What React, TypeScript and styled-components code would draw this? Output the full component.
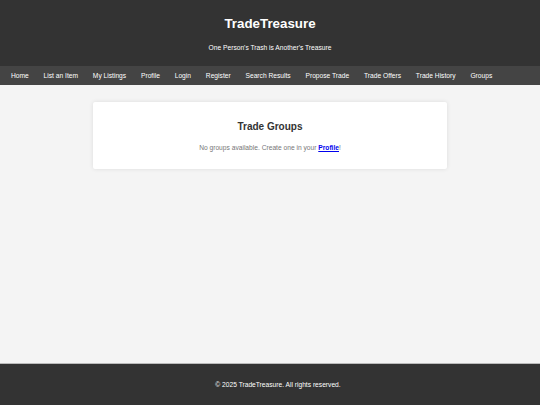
import React from "react";
import styled, { createGlobalStyle } from "styled-components";

const GlobalStyle = createGlobalStyle`
  html, body { margin: 0; padding: 0; }
  body {
    font-family: "Liberation Sans", Arial, sans-serif;
    font-size: 6.667px;
    background: #f4f4f4;
    color: #333;
  }
  * { box-sizing: border-box; }
`;

const Page = styled.div`
  min-height: 100vh;
  display: flex;
  flex-direction: column;
`;

const Header = styled.header`
  background: #333;
  color: #fff;
  height: 66px;
  padding: 15.5px 0 14px;
  display: flex;
  flex-direction: column;
  align-items: center;
`;

const Title = styled.h1`
  margin: 0;
  font-size: 13.33px;
  line-height: 15px;
  font-weight: bold;
`;

const Tagline = styled.p`
  margin: 13.5px 0 0;
  font-size: 6.667px;
  line-height: 8px;
`;

const Nav = styled.nav`
  background: #444;
  height: 19px;
  display: flex;
  align-items: center;
  padding-left: 11px;
  gap: 14.85px;
`;

const NavLink = styled.a`
  color: #fff;
  text-decoration: none;
  font-size: 6.667px;
  line-height: 8px;
`;

const Main = styled.main`
  flex: 1;
  background: #f4f4f4;
  padding-top: 17px;
`;

const Card = styled.section`
  width: 354px;
  margin: 0 auto;
  background: #fff;
  border-radius: 2px;
  box-shadow: 0 0 4px rgba(0, 0, 0, 0.1);
  padding: 19px 0 17px;
  text-align: center;
`;

const CardTitle = styled.h2`
  margin: 0;
  font-size: 10px;
  line-height: 12px;
  font-weight: bold;
  color: #333;
`;

const Empty = styled.p`
  margin: 11px 0 0;
  font-size: 6.667px;
  line-height: 8px;
  color: #777;
`;

const Link = styled.a`
  color: #0000ee;
  font-weight: bold;
  text-decoration: underline;
`;

const Footer = styled.footer`
  background: #333;
  border-top: 1px solid #bbb;
  height: 42px;
  color: #fff;
  display: flex;
  align-items: center;
  justify-content: center;
  padding-left: 16px;
  font-size: 6.667px;
  line-height: 8px;
`;

const links = [
  "Home",
  "List an Item",
  "My Listings",
  "Profile",
  "Login",
  "Register",
  "Search Results",
  "Propose Trade",
  "Trade Offers",
  "Trade History",
  "Groups",
];

export default function App() {
  return (
    <>
      <GlobalStyle />
      <Page>
        <Header>
          <Title>TradeTreasure</Title>
          <Tagline>One Person's Trash is Another's Treasure</Tagline>
        </Header>
        <Nav>
          {links.map((l) => (
            <NavLink key={l} href="#">
              {l}
            </NavLink>
          ))}
        </Nav>
        <Main>
          <Card>
            <CardTitle>Trade Groups</CardTitle>
            <Empty>
              No groups available. Create one in your <Link href="#">Profile</Link>!
            </Empty>
          </Card>
        </Main>
        <Footer>© 2025 TradeTreasure. All rights reserved.</Footer>
      </Page>
    </>
  );
}
